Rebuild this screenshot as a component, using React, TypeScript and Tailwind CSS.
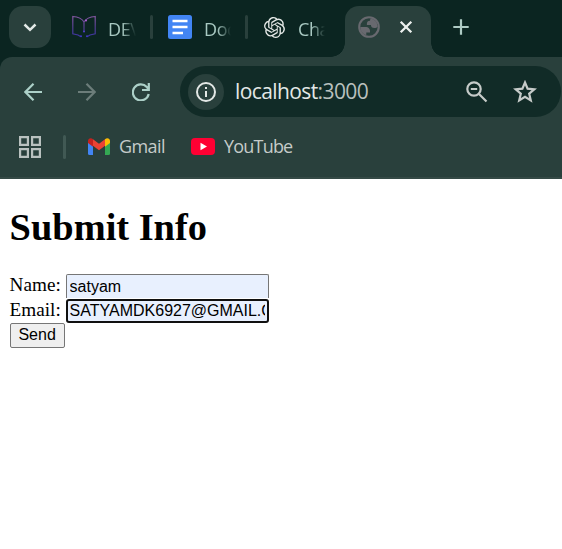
import React from 'react';
import { SiOpenai } from 'react-icons/si';

const fade = '[mask-image:linear-gradient(to_right,black_50%,transparent)]';

function TabLabel({ text, className }: { text: string; className: string }) {
  return (
    <span className={`mt-[3px] overflow-hidden whitespace-nowrap text-[18px] leading-6 tracking-[-0.4px] text-[#a9c9c2] ${fade} ${className}`}>
      {text}
    </span>
  );
}

function Divider({ className }: { className: string }) {
  return <span className={`h-6 w-[3px] shrink-0 rounded-full bg-[#29403c] ${className}`} />;
}

function BookIcon() {
  return (
    <svg className="ml-[21px] h-6 w-6 shrink-0" viewBox="0 0 24 24" fill="none">
      <defs>
        <linearGradient id="book" x1="0" y1="0" x2="0" y2="24" gradientUnits="userSpaceOnUse">
          <stop stopColor="#8a5aa4" />
          <stop offset=".5" stopColor="#553f90" />
          <stop offset="1" stopColor="#3632a8" />
        </linearGradient>
      </defs>
      <path
        d="M8.500 21.500L6 20L.8 18.800V1.500Q9 2 12 7Q15 2 23.200 1.500V18.800L18 20L15.500 21.500M12 7V17"
        stroke="url(#book)"
        strokeWidth="1.2"
      />
      <circle cx="9" cy="21.300" r="1" fill="#4138c8" />
      <circle cx="15" cy="21.300" r="1" fill="#4138c8" />
      <circle cx="12" cy="16.500" r="1" fill="#5140c8" />
      <circle cx="14" cy="5.500" r="1" fill="#b660dc" />
    </svg>
  );
}

function DocsIcon() {
  return (
    <svg className="ml-[15px] h-6 w-6 shrink-0" viewBox="0 0 24 24">
      <rect width="24" height="24" rx="2.500" fill="#4285f4" />
      <path d="M4.500 6H19.500M4.500 12H19.500M4.500 18H15" stroke="white" strokeWidth="2.700" />
    </svg>
  );
}

function GlobeIcon() {
  return (
    <svg className="ml-[11px] h-[26px] w-[26px] shrink-0" viewBox="0 0 24 24" fill="#68696f">
      <circle cx="12" cy="12" r="9" fill="none" stroke="#68696f" strokeWidth="2" />
      <path d="M4 12h4.400c3.407.022 4.922 1.730 4.543 5.127H9.488v2.470A8.004 8.004 0 0 1 4 12z" />
      <path d="M19.986 11.514C19.327 12.504 18.332 13 17 13c-2.137 0-3.206-.916-3.206-2.750h-3.748c-.274-2.728.683-4.092 2.870-4.092 0-.975.327-1.597.811-1.970A8.004 8.004 0 0 1 19.986 11.514z" />
    </svg>
  );
}

function TabStrip() {
  return (
    <div className="flex h-[57px] items-start bg-[#0b2521]">
      <div className="flex h-12 items-center pt-[6px]">
        <button className="ml-[9px] flex h-[42px] w-[42px] shrink-0 items-center justify-center rounded-[14px] bg-[#29403c]">
          <svg className="h-4 w-4" viewBox="0 0 16 16" fill="none">
            <path d="M2.500 5.500L8 10.800L13.500 5.500" stroke="#e3e9e7" strokeWidth="2.500" />
          </svg>
        </button>
        <BookIcon />
        <TabLabel text="DEV" className="ml-[12px] w-[28px]" />
        <Divider className="ml-[14px]" />
        <DocsIcon />
        <TabLabel text="Docs" className="ml-[12px] w-[27px]" />
        <Divider className="ml-[14px]" />
        <SiOpenai className="ml-[16px] h-[21px] w-[21px] shrink-0 text-[#e4e8e6]" />
        <TabLabel text="ChatGPT" className="ml-[13px] w-[27px]" />
      </div>
      <div className="relative ml-5 mt-[6px] flex h-[51px] w-[86px] shrink-0 rounded-t-[14px] bg-[#29403c] pb-[9px]">
        <span className="absolute -left-[14px] bottom-0 h-[14px] w-[14px] bg-[radial-gradient(circle_at_0_0,transparent_13.500px,#29403c_14px)]" />
        <span className="absolute -right-[14px] bottom-0 h-[14px] w-[14px] bg-[radial-gradient(circle_at_100%_0,transparent_13.500px,#29403c_14px)]" />
        <div className="flex items-center">
          <GlobeIcon />
          <svg className="ml-[17px] h-[14px] w-[14px]" viewBox="0 0 14 14">
            <path d="M1.700 1.700L12.300 12.300M12.300 1.700L1.700 12.300" stroke="#edf1ef" strokeWidth="2.300" />
          </svg>
        </div>
      </div>
      <svg className="ml-[22px] mt-[19px] h-4 w-4" viewBox="0 0 16 16">
        <path d="M8 .3V15.700M.3 8H15.700" stroke="#aecbc4" strokeWidth="2.200" />
      </svg>
    </div>
  );
}

function Toolbar() {
  return (
    <div className="bg-[#0b2521]">
      <div className="flex h-[61px] items-center rounded-tl-[12px] bg-[#29403c] pt-[8px]">
        <svg className="ml-6 h-[18px] w-[18px]" viewBox="0 0 18 18" fill="none" stroke="#acd0c8" strokeWidth="2.200">
          <path d="M18 9H1.500M9.500 .8L1.400 9L9.500 17.200" />
        </svg>
        <svg className="ml-9 h-[18px] w-[18px]" viewBox="0 0 18 18" fill="none" stroke="#6c7d7a" strokeWidth="2.200">
          <path d="M0 9H16.500M8.500 .8L16.600 9L8.500 17.200" />
        </svg>
        <svg className="ml-9 h-[18px] w-[18px]" viewBox="0 0 18 18" fill="none" stroke="#acd0c8" strokeWidth="2.200">
          <path d="M16.800 0V7H10M16.500 6.500L14.800 4A8 8 0 1 0 16.700 11" />
        </svg>
        <div className="ml-[30px] flex h-[51px] w-[381px] items-center rounded-full bg-[#112b27] pl-[8px]">
          <span className="flex h-9 w-9 items-center justify-center rounded-full bg-[#29403c]">
            <svg className="h-5 w-5" viewBox="0 0 20 20" fill="none" stroke="#e4e8e6" strokeWidth="2">
              <circle cx="10" cy="10" r="9" />
              <path d="M10 9V15M10 5V7" />
            </svg>
          </span>
          <span className="mb-[2px] ml-[11px] w-[231px] whitespace-nowrap text-[21px] leading-[30px] tracking-[-0.6px] text-[#e3e8e6]">
            localhost<span className="text-[#b9c0be]">:3000</span>
          </span>
          <svg className="h-[22px] w-[22px]" viewBox="0 0 22 22" fill="none" stroke="#c6cbc9" strokeWidth="2.200">
            <circle cx="8" cy="8" r="6.700" />
            <path d="M4.800 8H11.200M13 13L20.500 20.500" />
          </svg>
          <svg className="ml-[25px] h-6 w-6" viewBox="0 0 24 24" fill="none" stroke="#c6cbc9" strokeWidth="2.200">
            <path d="M12 2.500L14.600 8.700L21.300 9.300L16.200 13.700L17.800 20.500L12 16.900L6.200 20.500L7.800 13.700L2.700 9.300L9.400 8.700Z" />
          </svg>
        </div>
      </div>
    </div>
  );
}

function Bookmarks() {
  return (
    <div className="flex h-[61px] items-center border-b-2 border-[#354a46] bg-[#29403c] pb-[2px] text-[18px] leading-6 text-[#c5cbc9]">
      <svg className="ml-[19px] h-[22px] w-[22px]" viewBox="0 0 22 22" fill="none" stroke="#b9c1bf" strokeWidth="2.200">
        <path d="M1.100 1.100H8.900V8.900H1.100ZM13.100 1.100H20.900V8.900H13.100ZM1.100 13.100H8.900V20.900H1.100ZM13.100 13.100H20.900V20.900H13.100Z" />
      </svg>
      <span className="ml-[22px] h-6 w-[3px] rounded-full bg-[#415954]" />
      <svg className="ml-[22px] h-[17px] w-[22px]" viewBox="0 0 22 17">
        <path d="M0 3H5V17H1.500Q0 17 0 15.500Z" fill="#4285f4" />
        <path d="M17 3H22V15.500Q22 17 20.500 17H17Z" fill="#34a853" />
        <path d="M17 1.200C19-.8 22 .2 22 3V5L17 8.700Z" fill="#fbbc04" />
        <path d="M5 1.200L11 5.700L17 1.200V7.700L11 12.300L5 7.700Z" fill="#ea4335" />
        <path d="M5 1.200C3-.8 0 .2 0 3V5L5 8.700Z" fill="#c5221f" />
      </svg>
      <span className="mb-px ml-[9px] w-[48px] tracking-[-0.6px]">Gmail</span>
      <svg className="ml-6 h-[17px] w-6" viewBox="0 0 24 17">
        <rect width="24" height="17" rx="4" fill="#ff0033" />
        <path d="M9.500 4.800L16 8.500L9.500 12.200Z" fill="white" />
      </svg>
      <span className="mb-px ml-[9px] tracking-[-0.8px]">YouTube</span>
    </div>
  );
}

function InfoForm() {
  return (
    <form className="pl-[9.6px] font-['Liberation_Serif','Times_New_Roman',serif] text-[19.2px] text-black">
      <h1 className="pt-[26px] text-[38.4px] font-bold leading-[44px]">Submit Info</h1>
      <div className="mt-[25px] flex h-[25px] items-start">
        <label className="w-[56px] leading-[22px]">Name:</label>
        <input
          defaultValue="satyam"
          className="h-[24px] w-[203px] rounded-t-[2px] border border-b-0 border-[#767676] bg-[#e8f0fe] px-[3px] pt-px font-['Liberation_Sans',Arial,sans-serif] text-[16px] outline-none"
        />
      </div>
      <div className="flex h-[24px] items-start">
        <label className="w-[56px] leading-[22px]">Email:</label>
        <input
          defaultValue="SATYAMDK6927@GMAIL.COM"
          className="h-[24px] w-[203px] rounded-[3px] border-2 border-[#101010] bg-[#e8f0fe] px-[2px] font-['Liberation_Sans',Arial,sans-serif] text-[16px] outline-none"
        />
      </div>
      <button
        type="button"
        className="block h-[25px] w-[55px] rounded-[2px] border border-[#767676] bg-[#efefef] pb-px font-['Liberation_Sans',Arial,sans-serif] text-[16px] leading-[22px]"
      >
        Send
      </button>
    </form>
  );
}

export default function App() {
  return (
    <div className="h-[549px] w-[562px] overflow-hidden bg-white font-['Open_Sans','Noto_Sans',sans-serif]">
      <TabStrip />
      <Toolbar />
      <Bookmarks />
      <InfoForm />
    </div>
  );
}
